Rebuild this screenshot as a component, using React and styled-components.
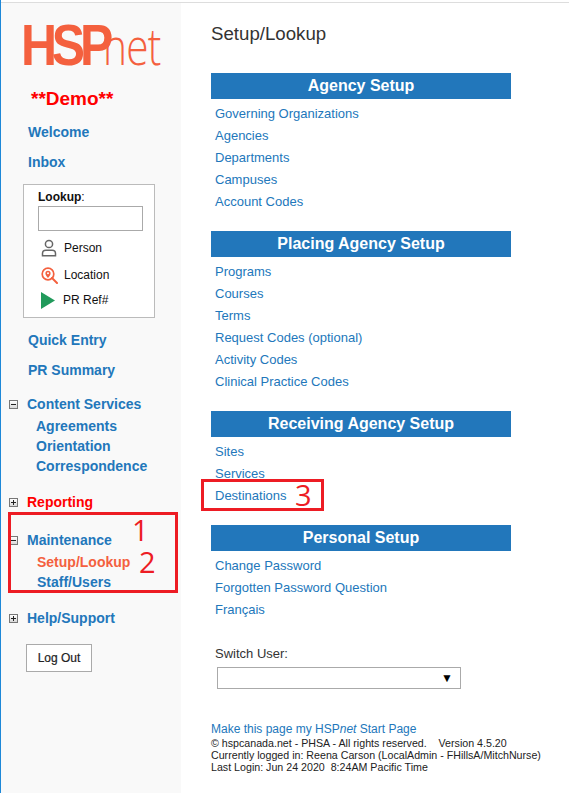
import React from "react";
import styled, { createGlobalStyle } from "styled-components";

const GlobalStyle = createGlobalStyle`
	html, body {
		margin: 0;
		padding: 0;
		background: #fff;
		font-family: "Liberation Sans", Arial, sans-serif;
	}
`;

const blue = "#2277bb";
const orange = "#f4603e";
const marker = "#ed1c24";

const Page = styled.div`
	position: relative;
	width: 569px;
	height: 793px;
	overflow: hidden;
	display: flex;
	box-sizing: border-box;
	padding-top: 3px;
	border-left: 1px solid #1e88d8;
	background: linear-gradient(#fff 2px, #dddddd 2px, #dddddd 3px, #fff 3px);
`;

const Sidebar = styled.aside`
	width: 180px;
	height: 790px;
	background: #f9f9f9;
	flex: none;
	display: flex;
	flex-direction: column;
`;

const Logo = styled.div`
	height: 72px;
	margin: 12px 0 0 20px;
	display: flex;
	align-items: baseline;
	line-height: 60px;
	white-space: nowrap;
	color: ${orange};
`;

const LogoBold = styled.span`
	display: inline-block;
	font-size: 58px;
	font-weight: 700;
	letter-spacing: -6px;
	width: 82px;
	transform: scaleX(0.86);
	transform-origin: left;
`;

const LogoLight = styled.span`
	display: inline-block;
	font-size: 52px;
	font-family: "Open Sans", sans-serif;
	font-weight: 300;
	transform: scaleX(0.78);
	transform-origin: left;
	letter-spacing: -1px;
`;

const Demo = styled.div`
	margin-left: 30px;
	font-size: 19px;
	font-weight: 700;
	color: #ff0000;
	line-height: 24px;
`;

const NavLink = styled.a`
	display: block;
	margin: ${p => p.$mt || 0}px 0 0 ${p => p.$ml || 27}px;
	font-size: 14px;
	font-weight: 700;
	line-height: 20px;
	color: ${p => p.$color || blue};
`;

const GroupRow = styled.div`
	display: flex;
	align-items: center;
	gap: 9px;
	margin: ${p => p.$mt}px 0 0 8px;
	height: 20px;
	font-size: 14px;
	font-weight: 700;
	color: ${p => p.$color || blue};
`;

const Toggle = styled.span`
	width: 9px;
	height: 9px;
	box-sizing: border-box;
	border: 1px solid #777;
	background: linear-gradient(#fff, #d8d8d8);
	display: flex;
	align-items: center;
	justify-content: center;
	position: relative;
	&::before {
		content: "";
		width: 5px;
		height: 1px;
		background: #222;
	}
	&::after {
		content: "";
		display: ${p => (p.$open ? "none" : "block")};
		position: absolute;
		left: 3px;
		top: 1px;
		width: 1px;
		height: 5px;
		background: #222;
	}
`;

const LookupBox = styled.div`
	width: 132px;
	height: 134px;
	box-sizing: border-box;
	margin: 12px 0 0 22px;
	border: 1px solid #bbb;
	background: #fff;
	padding: 5px 11px 0 14px;
	display: flex;
	flex-direction: column;
	font-size: 12px;
	color: #111;
`;

const LookupLabel = styled.label`
	line-height: 14px;
	font-weight: 700;
	span {
		font-weight: 400;
	}
`;

const LookupField = styled.div`
	height: 25px;
	margin-top: 2px;
	border: 1px solid #aaa;
	background: #fff;
	box-sizing: border-box;
`;

const LookupOption = styled.div`
	display: flex;
	align-items: center;
	gap: ${p => p.$gap}px;
	height: 20px;
	margin: ${p => p.$mt}px 0 0 3px;
`;

const LogOut = styled.button`
	width: 66px;
	height: 28px;
	margin: 16px 0 0 25px;
	padding: 0;
	border: 1px solid #aaa;
	background: #fff;
	font: 400 12px "Liberation Sans", Arial, sans-serif;
	-webkit-text-stroke: 0.2px #222;
	color: #222;
`;

const Main = styled.main`
	flex: none;
	width: 300px;
	margin-left: 30px;
	display: flex;
	flex-direction: column;
`;

const Title = styled.h1`
	margin: 19px 0 0;
	font-size: 18.67px;
	font-weight: 400;
	line-height: 24px;
	color: #333;
`;

const SectionBar = styled.h2`
	margin: ${p => p.$mt}px 0 4px;
	height: 26px;
	background: ${blue};
	color: #fff;
	font-size: 16px;
	font-weight: 700;
	line-height: 25px;
	text-align: center;
`;

const SetupLink = styled.a`
	display: block;
	padding-left: 4px;
	font-size: 13px;
	line-height: 22px;
	color: ${blue};
`;

const SwitchLabel = styled.div`
	margin: 23px 0 0 4px;
	font-size: 13px;
	line-height: 20px;
	color: #333;
`;

const SwitchSelect = styled.div`
	width: 244px;
	height: 22px;
	margin: 3px 0 0 6px;
	box-sizing: border-box;
	border: 1px solid #aaa;
	display: flex;
	align-items: center;
	justify-content: flex-end;
	padding-right: 7px;
	font-size: 12px;
	color: #000;
`;

const StartLink = styled.a`
	display: block;
	margin-top: 33px;
	font-size: 12px;
	line-height: 15px;
	white-space: nowrap;
	color: ${blue};
`;

const Footer = styled.div`
	font-size: 10.67px;
	line-height: 12px;
	white-space: pre;
	color: #222;
`;

const MarkerBox = styled.div`
	position: absolute;
	left: ${p => p.$x}px;
	top: ${p => p.$y}px;
	width: ${p => p.$w}px;
	height: ${p => p.$h}px;
	box-sizing: border-box;
	border: 3px solid ${marker};
`;

const MarkerDigit = styled.span`
	position: absolute;
	left: ${p => p.$x}px;
	top: ${p => p.$y}px;
	font-family: "Open Sans", sans-serif;
	font-size: 29px;
	line-height: 30px;
	color: ${marker};
`;

const PersonIcon = () => (
	<svg width="16" height="18" viewBox="0 0 16 18" fill="none" stroke="#666" strokeWidth="1.5">
		<circle cx="8" cy="5" r="3.6" />
		<path d="M1.5 16.7v-2.2c0-2 1.6-3.2 3.4-3.2h6.2c1.8 0 3.4 1.2 3.4 3.2v2.2z" />
	</svg>
);

const LocationIcon = () => (
	<svg width="17" height="17" viewBox="0 0 17 17" fill="none">
		<circle cx="7" cy="7" r="5.8" stroke="#f4603e" strokeWidth="1.7" />
		<path d="M7 11c-1.6-2-2.6-3.2-2.6-4.6a2.6 2.6 0 0 1 5.2 0C9.600 7.800 8.600 9 7 11z" fill="#f4603e" />
		<circle cx="7" cy="6.300" r="1" fill="#fff" />
		<path d="M11 11l5 5" stroke="#f4603e" strokeWidth="2" strokeLinecap="round" />
	</svg>
);

const PlayIcon = () => (
	<svg width="14" height="17" viewBox="0 0 14 17">
		<path d="M0 0l14 8.500L0 17z" fill="#219a5b" />
	</svg>
);

const sections = [
	{
		title: "Agency Setup",
		mt: 27,
		links: ["Governing Organizations", "Agencies", "Departments", "Campuses", "Account Codes"],
	},
	{
		title: "Placing Agency Setup",
		mt: 18,
		links: ["Programs", "Courses", "Terms", "Request Codes (optional)", "Activity Codes", "Clinical Practice Codes"],
	},
	{
		title: "Receiving Agency Setup",
		mt: 18,
		links: ["Sites", "Services", "Destinations"],
	},
	{
		title: "Personal Setup",
		mt: 18,
		links: ["Change Password", "Forgotten Password Question", "Français"],
	},
];

const App = () => (
	<>
		<GlobalStyle />
		<Page>
			<Sidebar>
				<Logo>
					<LogoBold>HSP</LogoBold>
					<LogoLight>net</LogoLight>
				</Logo>
				<Demo>**Demo**</Demo>
				<NavLink $mt={11}>Welcome</NavLink>
				<NavLink $mt={10}>Inbox</NavLink>
				<LookupBox>
					<LookupLabel>
						Lookup<span>:</span>
					</LookupLabel>
					<LookupField />
					<LookupOption $mt={7} $gap={7}>
						<PersonIcon />
						Person
					</LookupOption>
					<LookupOption $mt={7} $gap={6}>
						<LocationIcon />
						Location
					</LookupOption>
					<LookupOption $mt={5} $gap={8}>
						<PlayIcon />
						PR Ref#
					</LookupOption>
				</LookupBox>
				<NavLink $mt={12}>Quick Entry</NavLink>
				<NavLink $mt={10}>PR Summary</NavLink>
				<GroupRow $mt={14}>
					<Toggle $open />
					Content Services
				</GroupRow>
				<NavLink $ml={35} $mt={2}>Agreements</NavLink>
				<NavLink $ml={35}>Orientation</NavLink>
				<NavLink $ml={35}>Correspondence</NavLink>
				<GroupRow $mt={16} $color="#ff0000">
					<Toggle />
					Reporting
				</GroupRow>
				<GroupRow $mt={18}>
					<Toggle $open />
					Maintenance
				</GroupRow>
				<NavLink $ml={36} $mt={2} $color={orange}>Setup/Lookup</NavLink>
				<NavLink $ml={36}>Staff/Users</NavLink>
				<GroupRow $mt={16}>
					<Toggle />
					Help/Support
				</GroupRow>
				<LogOut>Log Out</LogOut>
			</Sidebar>
			<Main>
				<Title>Setup/Lookup</Title>
				{sections.map(section => (
					<React.Fragment key={section.title}>
						<SectionBar $mt={section.mt}>{section.title}</SectionBar>
						{section.links.map(link => (
							<SetupLink key={link}>{link}</SetupLink>
						))}
					</React.Fragment>
				))}
				<SwitchLabel>Switch User:</SwitchLabel>
				<SwitchSelect>▼</SwitchSelect>
				<StartLink>
					Make this page my HSP<em>net</em> Start Page
				</StartLink>
				<Footer>
					{"© hspcanada.net - PHSA - All rights reserved.    Version 4.5.20\nCurrently logged in: Reena Carson (LocalAdmin - FHillsA/MitchNurse)\nLast Login: Jun 24 2020  8:24AM Pacific Time"}
				</Footer>
			</Main>
			<MarkerBox $x={7} $y={512} $w={170} $h={81} />
			<MarkerDigit $x={131} $y={515}>1</MarkerDigit>
			<MarkerDigit $x={138} $y={547}>2</MarkerDigit>
			<MarkerBox $x={200} $y={479} $w={123} $h={32} />
			<MarkerDigit $x={294} $y={480}>3</MarkerDigit>
		</Page>
	</>
);

export default App;
